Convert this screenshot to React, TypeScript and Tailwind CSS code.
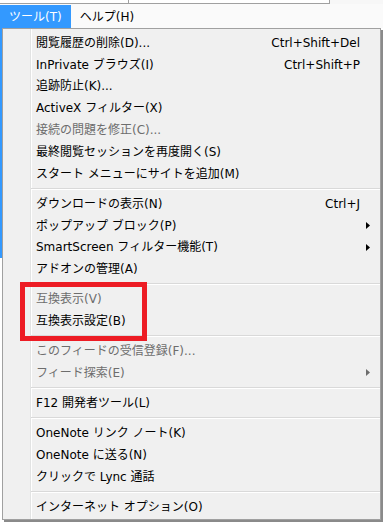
import React from "react";

type Item = { label: string; shortcut?: string; disabled?: boolean; sub?: boolean };

const groups: Item[][] = [
  [
    { label: "閲覧履歴の削除(D)...", shortcut: "Ctrl+Shift+Del" },
    { label: "InPrivate ブラウズ(I)", shortcut: "Ctrl+Shift+P" },
    { label: "追跡防止(K)..." },
    { label: "ActiveX フィルター(X)" },
    { label: "接続の問題を修正(C)...", disabled: true },
    { label: "最終閲覧セッションを再度開く(S)" },
    { label: "スタート メニューにサイトを追加(M)" },
  ],
  [
    { label: "ダウンロードの表示(N)", shortcut: "Ctrl+J" },
    { label: "ポップアップ ブロック(P)", sub: true },
    { label: "SmartScreen フィルター機能(T)", sub: true },
    { label: "アドオンの管理(A)" },
  ],
  [{ label: "互換表示(V)", disabled: true }, { label: "互換表示設定(B)" }],
  [
    { label: "このフィードの受信登録(F)...", disabled: true },
    { label: "フィード探索(E)", disabled: true, sub: true },
  ],
  [{ label: "F12 開発者ツール(L)" }],
  [
    { label: "OneNote リンク ノート(K)" },
    { label: "OneNote に送る(N)" },
    { label: "クリックで Lync 通話" },
  ],
  [{ label: "インターネット オプション(O)" }],
];

function Arrow({ disabled }: { disabled?: boolean }) {
  return (
    <svg width="4" height="7" viewBox="0 0 4 7" className="block">
      <path d="M0 0 L4 3.5 L0 7 Z" fill={disabled ? "#6d6d6d" : "#000"} />
    </svg>
  );
}

function Row({ item }: { item: Item }) {
  return (
    <div
      className={`flex h-[21.8px] items-center pl-[4px] ${
        item.disabled ? "text-[#6d6d6d]" : "text-black"
      }`}
    >
      <span className="flex-1 whitespace-nowrap leading-none">{item.label}</span>
      {item.shortcut && <span className="whitespace-nowrap leading-none">{item.shortcut}</span>}
      <div className="flex w-[20px] items-center pl-[6px]">{item.sub && <Arrow disabled={item.disabled} />}</div>
    </div>
  );
}

function Separator() {
  return (
    <div className="flex h-[8.3px] flex-col justify-center -ml-[1px]">
      <div className="h-px bg-[#d9d9d9]" />
      <div className="h-px bg-white" />
    </div>
  );
}

export default function App() {
  return (
    <div className="relative h-[523px] w-[383px] overflow-hidden bg-white font-['DejaVu_Sans','Noto_Sans_CJK_JP',sans-serif] text-[12px]">
      {/* top strip */}
      <div className="flex h-[4px]">
        <div className="h-[4px] w-[129px] border-b border-r border-[#a0a0a0] bg-white" />
        <div className="h-[4px] w-[201px] border-b border-r border-[#a0a0a0] bg-white" />
        <div className="h-[4px] flex-1 bg-[#f7f7f7]" />
      </div>
      {/* menubar */}
      <div className="flex h-[24px] bg-[#fafafa] pt-[1px]">
        <div className="flex h-[23px] items-center bg-[#3399ff] px-[9px] text-white">ツール(T)</div>
        <div className="flex h-[23px] items-center px-[9px] text-black">ヘルプ(H)</div>
      </div>
      {/* dropdown area */}
      <div className="flex">
        <div className="flex w-[2px] flex-col">
          <div className="h-[230px] w-[2px] bg-[#3399ff]" />
        </div>
        <div className="flex h-[492px] w-[379px] border border-[#a0a0a0] bg-[#f0f0f0] shadow-[2px_2px_0_#8a8a8a]">
          <div className="w-[27px]" />
          <div className="w-px bg-[#e2e3e3]" />
          <div className="w-px bg-white" />
          <div className="flex flex-1 flex-col pt-[3px]">
            {groups.map((g, gi) => (
              <React.Fragment key={gi}>
                {gi > 0 && <Separator />}
                {g.map((it, ii) => (
                  <Row key={ii} item={it} />
                ))}
              </React.Fragment>
            ))}
          </div>
        </div>
      </div>
      {/* red highlight box */}
      <div className="absolute left-[20px] top-[282px] h-[59px] w-[127px] border-[5px] border-[#ed1c24]" />
    </div>
  );
}
